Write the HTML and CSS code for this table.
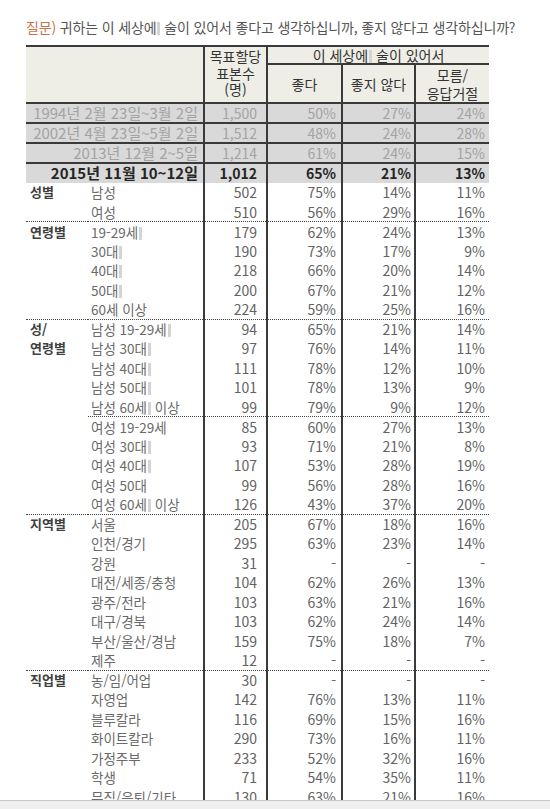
FILE: index.html
```html
<!DOCTYPE html>
<html lang="ko">
<head>
<meta charset="utf-8">
<title>술에 대한 인식</title>
<link rel="stylesheet" href="styles.css">
</head>
<body>
<div class="page">
  <p class="question"><span class="q-mark">질문)</span> 귀하는 이 세상에<span class="ghost"></span> 술이 있어서 좋다고 생각하십니까, 좋지 않다고 생각하십니까?</p>
  <table class="survey">
    <colgroup>
      <col class="c-group"><col class="c-sub"><col class="c-n"><col class="c-p1"><col class="c-p2"><col class="c-p3">
    </colgroup>
    <thead>
      <tr class="h1">
        <th class="blank" rowspan="2" colspan="2"></th>
        <th class="target" rowspan="2">목표할당<br>표본수<br>(명)</th>
        <th class="span" colspan="3">이 세상에<span class="ghost"></span> 술이 있어서</th>
      </tr>
      <tr class="h2">
        <th class="sub">좋다</th>
        <th class="sub">좋지 않다</th>
        <th class="sub last">모름/<br>응답거절</th>
      </tr>
    </thead>
    <tbody>
      <tr class="period"><td colspan="2" class="plabel">1994년 2월 23일~3월 2일</td><td class="n">1,500</td><td class="p1">50%</td><td class="p2">27%</td><td class="p3">24%</td></tr>
      <tr class="period"><td colspan="2" class="plabel">2002년 4월 23일~5월 2일</td><td class="n">1,512</td><td class="p1">48%</td><td class="p2">24%</td><td class="p3">28%</td></tr>
      <tr class="period"><td colspan="2" class="plabel">2013년 12월 2~5일</td><td class="n">1,214</td><td class="p1">61%</td><td class="p2">24%</td><td class="p3">15%</td></tr>
      <tr class="period current"><td colspan="2" class="plabel">2015년 11월 10~12일</td><td class="n">1,012</td><td class="p1">65%</td><td class="p2">21%</td><td class="p3">13%</td></tr>

      <tr><td class="g">성별</td><td class="s">남성</td><td class="n">502</td><td class="p1">75%</td><td class="p2">14%</td><td class="p3">11%</td></tr>
      <tr class="end"><td class="g"></td><td class="s">여성</td><td class="n">510</td><td class="p1">56%</td><td class="p2">29%</td><td class="p3">16%</td></tr>

      <tr><td class="g">연령별</td><td class="s">19-29세<span class="ghost"></span></td><td class="n">179</td><td class="p1">62%</td><td class="p2">24%</td><td class="p3">13%</td></tr>
      <tr><td class="g"></td><td class="s">30대<span class="ghost"></span></td><td class="n">190</td><td class="p1">73%</td><td class="p2">17%</td><td class="p3">9%</td></tr>
      <tr><td class="g"></td><td class="s">40대<span class="ghost"></span></td><td class="n">218</td><td class="p1">66%</td><td class="p2">20%</td><td class="p3">14%</td></tr>
      <tr><td class="g"></td><td class="s">50대<span class="ghost"></span></td><td class="n">200</td><td class="p1">67%</td><td class="p2">21%</td><td class="p3">12%</td></tr>
      <tr class="end"><td class="g"></td><td class="s">60세 이상</td><td class="n">224</td><td class="p1">59%</td><td class="p2">25%</td><td class="p3">16%</td></tr>

      <tr><td class="g">성/</td><td class="s">남성 19-29세<span class="ghost"></span></td><td class="n">94</td><td class="p1">65%</td><td class="p2">21%</td><td class="p3">14%</td></tr>
      <tr><td class="g">연령별</td><td class="s">남성 30대<span class="ghost"></span></td><td class="n">97</td><td class="p1">76%</td><td class="p2">14%</td><td class="p3">11%</td></tr>
      <tr><td class="g"></td><td class="s">남성 40대<span class="ghost"></span></td><td class="n">111</td><td class="p1">78%</td><td class="p2">12%</td><td class="p3">10%</td></tr>
      <tr><td class="g"></td><td class="s">남성 50대<span class="ghost"></span></td><td class="n">101</td><td class="p1">78%</td><td class="p2">13%</td><td class="p3">9%</td></tr>
      <tr class="end inner"><td class="g"></td><td class="s">남성 60세<span class="ghost"></span> 이상</td><td class="n">99</td><td class="p1">79%</td><td class="p2">9%</td><td class="p3">12%</td></tr>
      <tr><td class="g"></td><td class="s">여성 19-29세</td><td class="n">85</td><td class="p1">60%</td><td class="p2">27%</td><td class="p3">13%</td></tr>
      <tr><td class="g"></td><td class="s">여성 30대<span class="ghost"></span></td><td class="n">93</td><td class="p1">71%</td><td class="p2">21%</td><td class="p3">8%</td></tr>
      <tr><td class="g"></td><td class="s">여성 40대<span class="ghost"></span></td><td class="n">107</td><td class="p1">53%</td><td class="p2">28%</td><td class="p3">19%</td></tr>
      <tr><td class="g"></td><td class="s">여성 50대</td><td class="n">99</td><td class="p1">56%</td><td class="p2">28%</td><td class="p3">16%</td></tr>
      <tr class="end"><td class="g"></td><td class="s">여성 60세<span class="ghost"></span> 이상</td><td class="n">126</td><td class="p1">43%</td><td class="p2">37%</td><td class="p3">20%</td></tr>

      <tr><td class="g">지역별</td><td class="s">서울</td><td class="n">205</td><td class="p1">67%</td><td class="p2">18%</td><td class="p3">16%</td></tr>
      <tr><td class="g"></td><td class="s">인천/경기</td><td class="n">295</td><td class="p1">63%</td><td class="p2">23%</td><td class="p3">14%</td></tr>
      <tr><td class="g"></td><td class="s">강원</td><td class="n">31</td><td class="p1">-</td><td class="p2">-</td><td class="p3">-</td></tr>
      <tr><td class="g"></td><td class="s">대전/세종/충청</td><td class="n">104</td><td class="p1">62%</td><td class="p2">26%</td><td class="p3">13%</td></tr>
      <tr><td class="g"></td><td class="s">광주/전라</td><td class="n">103</td><td class="p1">63%</td><td class="p2">21%</td><td class="p3">16%</td></tr>
      <tr><td class="g"></td><td class="s">대구/경북</td><td class="n">103</td><td class="p1">62%</td><td class="p2">24%</td><td class="p3">14%</td></tr>
      <tr><td class="g"></td><td class="s">부산/울산/경남</td><td class="n">159</td><td class="p1">75%</td><td class="p2">18%</td><td class="p3">7%</td></tr>
      <tr class="end"><td class="g"></td><td class="s">제주</td><td class="n">12</td><td class="p1">-</td><td class="p2">-</td><td class="p3">-</td></tr>

      <tr><td class="g">직업별</td><td class="s">농/임/어업</td><td class="n">30</td><td class="p1">-</td><td class="p2">-</td><td class="p3">-</td></tr>
      <tr><td class="g"></td><td class="s">자영업</td><td class="n">142</td><td class="p1">76%</td><td class="p2">13%</td><td class="p3">11%</td></tr>
      <tr><td class="g"></td><td class="s">블루칼라</td><td class="n">116</td><td class="p1">69%</td><td class="p2">15%</td><td class="p3">16%</td></tr>
      <tr><td class="g"></td><td class="s">화이트칼라</td><td class="n">290</td><td class="p1">73%</td><td class="p2">16%</td><td class="p3">11%</td></tr>
      <tr><td class="g"></td><td class="s">가정주부</td><td class="n">233</td><td class="p1">52%</td><td class="p2">32%</td><td class="p3">16%</td></tr>
      <tr><td class="g"></td><td class="s">학생</td><td class="n">71</td><td class="p1">54%</td><td class="p2">35%</td><td class="p3">11%</td></tr>
      <tr><td class="g"></td><td class="s">무직/은퇴/기타</td><td class="n">130</td><td class="p1">63%</td><td class="p2">21%</td><td class="p3">16%</td></tr>
    </tbody>
  </table>
</div>
<div class="bottom-bar"></div>
</body>
</html>
```

FILE: styles.css
```css
html, body {
  margin: 0;
  padding: 0;
  height: 809px;
  overflow: hidden;
  background: #ffffff;
}

body {
  font-family: "Noto Sans CJK KR", "Noto Sans", sans-serif;
  color: #595959;
}

.page {
  padding: 17px 0 0 26px;
}

.question {
  margin: 0 0 8px 0;
  font-size: 14px;
  line-height: 20px;
  color: #555555;
  white-space: nowrap;
  letter-spacing: -0.15px;
}

.q-mark {
  color: #c8734d;
}

.ghost {
  display: inline-block;
  width: 3px;
  height: 13px;
  margin-left: 1px;
  vertical-align: -2px;
  background: #d4d4d4;
}

.survey {
  border-collapse: collapse;
  table-layout: fixed;
  width: 463px;
  font-size: 14px;
}

.c-group { width: 62px; }
.c-sub { width: 116px; }
.c-n { width: 63px; }
.c-p1 { width: 75px; }
.c-p2 { width: 73px; }
.c-p3 { width: 74px; }

/* header */
.survey thead th {
  background: #eeeee7;
  color: #333333;
  font-weight: normal;
  font-size: 14px;
  padding: 0;
  text-align: center;
}

.survey .h1 th {
  border-top: 2px solid #3a3a3a;
}

.survey .h1 {
  height: 18px;
}

.survey .h2 {
  height: 39px;
}

.survey th.target {
  border-left: 2px solid #3a3a3a;
  border-right: 2px solid #3a3a3a;
  border-bottom: 2px solid #3a3a3a;
  vertical-align: top;
  line-height: 16.5px;
  padding-top: 1px;
}

.survey th.blank {
  border-bottom: 2px solid #3a3a3a;
}

.survey th.span {
  border-bottom: 2px solid #3a3a3a;
  line-height: 16px;
  vertical-align: middle;
}

.survey th.sub {
  border-bottom: 2px solid #3a3a3a;
  border-left: 2px solid #3a3a3a;
  line-height: 18px;
}

.survey th.sub:first-child {
  border-left: none;
}

/* body rows */
.survey tbody tr {
  height: 19.5px;
}

.survey td {
  padding: 0;
  line-height: 18px;
  white-space: nowrap;
  overflow: hidden;
}

.survey td.g {
  padding-left: 4px;
  font-weight: bold;
  font-size: 13px;
  color: #404040;
}

.survey td.s {
  padding-left: 3px;
  font-size: 13.5px;
  color: #6a6a6a;
}

.survey td.n,
.survey td.p1,
.survey td.p2,
.survey td.p3 {
  text-align: right;
  color: #636363;
}

.survey td.n {
  padding-right: 9px;
  border-left: 2px solid #3a3a3a;
}

.survey td.p1 {
  padding-right: 5px;
  border-left: 2px solid #3a3a3a;
}

.survey td.p2 {
  padding-right: 3px;
  border-left: 2px solid #3a3a3a;
}

.survey td.p3 {
  padding-right: 4px;
  border-left: 2px solid #3a3a3a;
}

/* period rows */
.survey tr.period td {
  background: #d9d9d9;
  color: #a3a3a3;
  border-bottom: 2px solid #3a3a3a;
}

.survey tr.period td.plabel {
  text-align: right;
  padding-right: 5px;
  font-size: 15px;
}

.survey tr.period.current td {
  color: #262626;
  font-weight: bold;
  border-bottom: none;
}

/* group end dotted separators */
.survey tr.end td {
  border-bottom: 1px dotted #444444;
}

.survey tr.end.inner td.g {
  border-bottom: none;
}

.bottom-bar {
  position: fixed;
  left: 0;
  right: 0;
  bottom: 0;
  height: 8px;
  background: #efefef;
  border-top: 1px solid #c8c8c8;
}
```
